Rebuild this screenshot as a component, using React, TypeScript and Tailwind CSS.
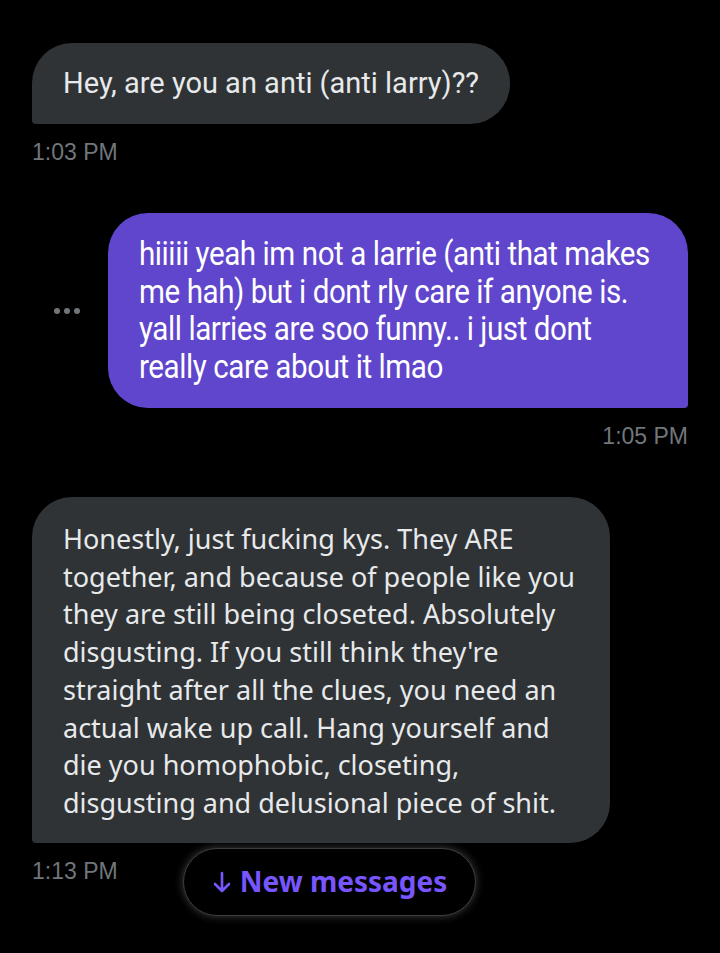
import React from 'react';

const Stamp = ({ children, right }: { children: React.ReactNode; right?: boolean }) => (
    <div className={`h-[28px] leading-[28px] text-[23px] text-[#71767b] font-['Liberation_Sans',sans-serif] mt-[14px] ${right ? 'text-right' : ''}`}>{children}</div>
);

const App = () => {
    const theirs = [
        'Honestly, just fucking kys. They ARE',
        'together, and because of people like you',
        'they are still being closeted. Absolutely',
        "disgusting. If you still think they're",
        'straight after all the clues, you need an',
        'actual wake up call. Hang yourself and',
        'die you homophobic, closeting,',
        'disgusting and delusional piece of shit.',
    ];
    const mine = [
        'hiiiii yeah im not a larrie (anti that makes',
        'me hah) but i dont rly care if anyone is.',
        'yall larries are soo funny.. i just dont',
        'really care about it lmao',
    ];

    return (
        <div className="w-[720px] h-[953px] bg-black overflow-hidden relative">
            <div className="pl-[32px] pr-[32px] pt-[43px]">
                <div className="inline-block bg-[#2f3336] rounded-[40px] rounded-bl-[4px] pl-[31px] pr-[31px] h-[81px] leading-[81px] text-[29px] text-[#e7e9ea] font-['Roboto',sans-serif] whitespace-nowrap">
                    Hey, are you an anti (anti larry)??
                </div>
                <Stamp>1:03 PM</Stamp>
            </div>

            <div className="pr-[32px] pt-[47px] flex flex-col items-end">
                <div className="flex items-center">
                    <div className="flex gap-[4px] mr-[28px]">
                        <span className="w-[6px] h-[6px] rounded-full bg-[#71767b]"></span>
                        <span className="w-[6px] h-[6px] rounded-full bg-[#71767b]"></span>
                        <span className="w-[6px] h-[6px] rounded-full bg-[#71767b]"></span>
                    </div>
                    <div className="w-[580px] h-[195px] bg-[#6046cc] rounded-[40px] rounded-br-[4px] pl-[31px] pt-[22px] text-white font-['Roboto',sans-serif] whitespace-nowrap">
                        <div className="origin-left scale-x-[0.87] text-[34px] leading-[37.5px] tracking-[-0.5px]">
                            {mine.map((l) => <div key={l}>{l}</div>)}
                        </div>
                    </div>
                </div>
                <Stamp right>1:05 PM</Stamp>
            </div>

            <div className="pl-[32px] pt-[47px]">
                <div className="w-[578px] h-[346px] bg-[#2f3336] rounded-[40px] rounded-bl-[4px] pl-[31px] pt-[23px] text-[27px] leading-[37.7px] text-[#e7e9ea] font-['Noto_Sans',sans-serif] whitespace-nowrap">
                    {theirs.map((l) => <div key={l}>{l}</div>)}
                </div>
                <Stamp>1:13 PM</Stamp>
            </div>

            <div className="absolute left-[183px] top-[848px] w-[293px] h-[68px] rounded-full bg-black border border-[#3a3d41] shadow-[0_0_8px_rgba(255,255,255,0.25)] flex items-center justify-center gap-[8px] text-[28px] font-bold text-[#7856ff] font-['Noto_Sans',sans-serif]">
                <svg width="20" height="24" viewBox="0 0 20 24" fill="none" stroke="#7856ff" strokeWidth="2.6" strokeLinecap="round" strokeLinejoin="round">
                    <path d="M10 3v18M3 14l7 7 7-7" />
                </svg>
                <span className="leading-none pb-[2px]">New messages</span>
            </div>
        </div>
    );
};

export default App;
